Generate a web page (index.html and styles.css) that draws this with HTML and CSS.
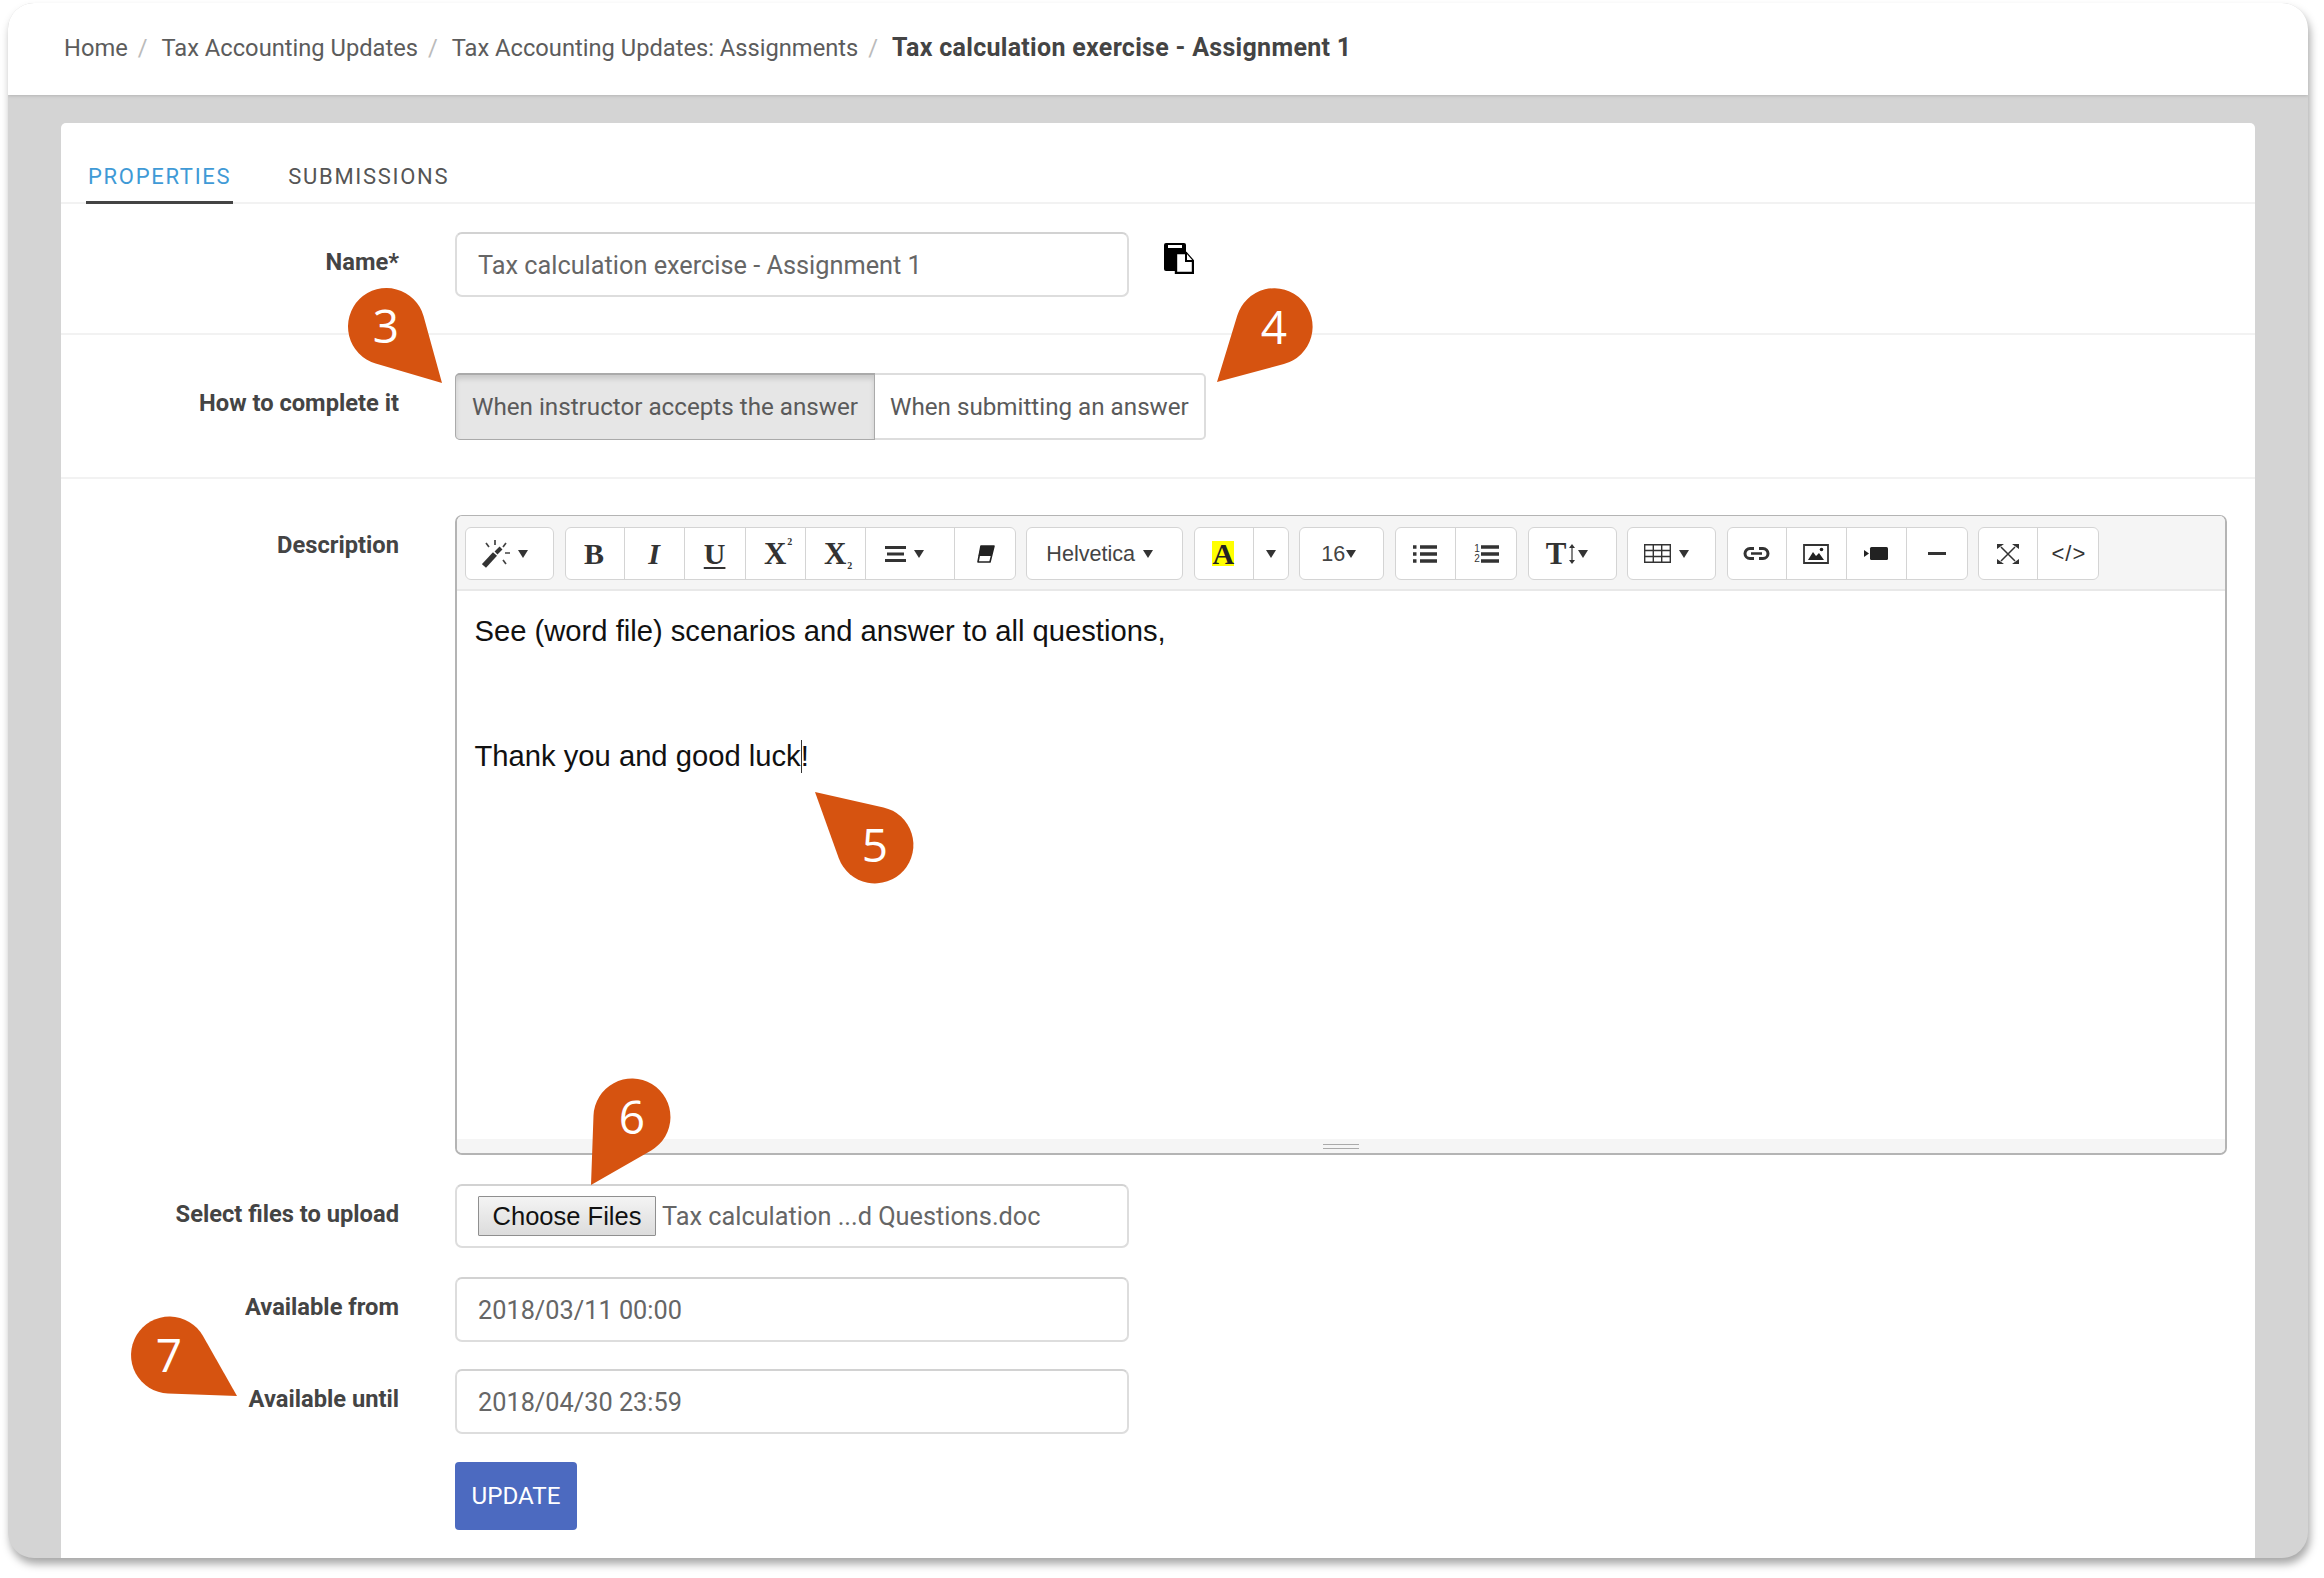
FILE: index.html
```html
<!DOCTYPE html>
<html lang="en">
<head>
<meta charset="utf-8">
<title>Tax calculation exercise - Assignment 1</title>
<link rel="stylesheet" href="styles.css">
</head>
<body>
<div class="frame">
  <nav class="crumbs">
    <a>Home</a><i>/</i><a>Tax Accounting Updates</a><i>/</i><a>Tax Accounting Updates: Assignments</a><i>/</i><b>Tax calculation exercise - Assignment 1</b>
  </nav>
  <main class="card">
    <div class="tabs">
      <span class="tab active">PROPERTIES</span>
      <span class="tab">SUBMISSIONS</span>
    </div>
    <section class="row row-name">
      <label class="lbl">Name*</label>
      <div class="ctl name-ctl">
        <div class="field">Tax calculation exercise - Assignment 1</div>
        <svg class="copy" viewBox="0 0 31 31" width="31" height="31"><path d="M1 2a2 2 0 0 1 2-2h18a2 2 0 0 1 2 2v26H3a2 2 0 0 1-2-2z" fill="#000"/><rect x="5" y="2" width="14" height="3" fill="#fff"/><path d="M13 10h10l7 8v12H13z" fill="#fff" stroke="#000" stroke-width="2.4"/><path d="M23 10v8h7" fill="#fff" stroke="#000" stroke-width="2"/></svg>
      </div>
    </section>
    <section class="row row-how">
      <label class="lbl">How to complete it</label>
      <div class="ctl">
        <div class="seg">
          <span class="seg-btn on">When instructor accepts the answer</span>
          <span class="seg-btn">When submitting an answer</span>
        </div>
      </div>
    </section>
    <section class="row row-rest">
      <label class="lbl">Description</label>
      <div class="ctl">
        <div class="editor">
          <div class="toolbar">
            <div class="grp"><span class="tb w89">
              <svg viewBox="0 0 28 28" width="28" height="28"><path d="M2 26 13 14" stroke="#333" stroke-width="5.500"/><path d="M14 13l5-5" stroke="#333" stroke-width="4"/><path d="M4 3l3 4M13 0v5M24 3l-3 4M23 13h5M21 20l3 4" stroke="#444" stroke-width="1.700" fill="none"/></svg><i class="caret"></i></span></div>
            <div class="grp">
              <span class="tb w60 ser">B</span>
              <span class="tb w60 ser it">I</span>
              <span class="tb w61 ser un">U</span>
              <span class="tb w60 ser sc">X<sup class="mini">2</sup></span>
              <span class="tb w60 ser sc">X<sub class="mini">2</sub></span>
              <span class="tb w89"><svg viewBox="0 0 21 16" width="21" height="16"><path d="M0 1.500h21M2 8h17M0 14.500h21" stroke="#333" stroke-width="3"/></svg><i class="caret"></i></span>
              <span class="tb w61"><svg viewBox="0 0 19 18" width="19" height="18"><path d="M5 1h13l-4 16H2z" fill="#fff" stroke="#222" stroke-width="1.600" stroke-linejoin="round"/><path d="M5 1h13l-2.400 10H2.600z" fill="#222"/></svg></span>
            </div>
            <div class="grp"><span class="tb w157 txt">Helvetica<i class="caret"></i></span></div>
            <div class="grp">
              <span class="tb w60"><span class="hl">A</span></span>
              <span class="tb w35"><i class="caret solo"></i></span>
            </div>
            <div class="grp"><span class="tb w85 txt tight">16<i class="caret"></i></span></div>
            <div class="grp">
              <span class="tb w61"><svg viewBox="0 0 24 18" width="24" height="18"><path d="M0 2h3.500M0 9h3.500M0 16h3.500" stroke="#333" stroke-width="3.400"/><path d="M7 2h17M7 9h17M7 16h17" stroke="#333" stroke-width="3.400"/></svg></span>
              <span class="tb w61 ol"><span class="ol-n">1<br>2</span><svg viewBox="0 0 18 18" width="18" height="18"><path d="M0 2h18M0 9h18M0 16h18" stroke="#333" stroke-width="3.400"/></svg></span>
            </div>
            <div class="grp"><span class="tb w89 tsize"><span class="bigt">T</span><svg viewBox="0 0 6 20" width="6" height="20"><path d="M3 2v16" stroke="#333" stroke-width="1.200"/><path d="M0 4l3-4 3 4zM0 16l3 4 3-4z" fill="#333"/></svg><i class="caret"></i></span></div>
            <div class="grp"><span class="tb w89"><svg viewBox="0 0 27 19" width="27" height="19"><path d="M.7.7h25.600v17.600H.7zM.7 6.500h25.600M.7 12.500h25.600M9.300.7v17.600M17.700.7v17.600" fill="none" stroke="#333" stroke-width="1.400"/></svg><i class="caret"></i></span></div>
            <div class="grp">
              <span class="tb w60"><svg viewBox="0 0 27 13" width="27" height="13"><path d="M11 1.500H7a5 5 0 0 0 0 10h4M16 1.500h4a5 5 0 0 1 0 10h-4" fill="none" stroke="#333" stroke-width="3"/><path d="M8 6.500h11" stroke="#333" stroke-width="2.400"/></svg></span>
              <span class="tb w60"><svg viewBox="0 0 26 20" width="26" height="20"><path d="M1 1h24v18H1z" fill="#fff" stroke="#333" stroke-width="1.800"/><path d="M5 16l5-8 3 4 3-3 5 7z" fill="#222"/><circle cx="18.500" cy="5.500" r="1.800" fill="#222"/></svg></span>
              <span class="tb w60"><svg viewBox="0 0 24 13" width="24" height="13"><rect x="6" y="0" width="18" height="13" rx="1.500" fill="#222"/><path d="M0 3l5 3.500L0 10z" fill="#222"/></svg></span>
              <span class="tb w61"><svg viewBox="0 0 18 3" width="18" height="3"><rect width="18" height="3" fill="#333"/></svg></span>
            </div>
            <div class="grp">
              <span class="tb w60"><svg viewBox="0 0 22 20" width="22" height="20"><path d="M4 3l14 14M18 3 4 17" stroke="#333" stroke-width="1.500"/><path d="M0 0h7L0 5zM22 0h-7l7 5zM0 20h7L0 15zM22 20h-7l7-5z" fill="#333"/></svg></span>
              <span class="tb w61 code">&lt;/&gt;</span>
            </div>
          </div>
          <div class="content">
            <p>See (word file) scenarios and answer to all questions,</p>
            <p><br></p>
            <p><br></p>
            <p>Thank you and good luck<span class="cursor"></span>!</p>
          </div>
          <div class="statusbar"><span class="grip"></span></div>
        </div>
      </div>
      <label class="lbl lbl-file">Select files to upload</label>
      <div class="ctl ctl-file">
        <div class="field filebox"><button class="choose" type="button">Choose Files</button><span class="fname">Tax calculation ...d Questions.doc</span></div>
      </div>
      <label class="lbl lbl-date">Available from</label>
      <div class="ctl ctl-date"><div class="field">2018/03/11 00:00</div></div>
      <label class="lbl lbl-date">Available until</label>
      <div class="ctl ctl-date"><div class="field">2018/04/30 23:59</div></div>
      <div class="ctl ctl-submit"><button class="update" type="button">UPDATE</button></div>
    </section>
  </main>
</div>
<svg class="callouts" viewBox="0 0 2324 1578" width="2324" height="1578">
  <g class="drop">
    <path d="M442 383 423.600 316.300A38.500 38.500 0 1 0 375.600 363.500Z"/>
    <path d="M1217 382 1237.200 315.800A38.500 38.500 0 1 1 1283.900 364Z"/>
    <path d="M815 792 883.500 807.400A38.500 38.500 0 1 1 838.700 858Z"/>
    <path d="M591 1185 593.500 1115.600A38.500 38.500 0 1 1 651.200 1150.400Z"/>
    <path d="M237 1396 203 1336A38.500 38.500 0 1 0 168 1393.500Z"/>
  </g>
  <g class="num">
    <text x="386" y="343">3</text>
    <text x="1274" y="344">4</text>
    <text x="875" y="862">5</text>
    <text x="632" y="1134">6</text>
    <text x="169" y="1372">7</text>
  </g>
</svg>
</body>
</html>
```
FILE: styles.css
```css
* { box-sizing: border-box; }
html, body { margin: 0; padding: 0; background: #fff; }
body {
  width: 2324px;
  height: 1578px;
  padding: 3px 16px 20px 8px;
  font-family: Roboto, "Liberation Sans", sans-serif;
  color: #555;
  overflow: hidden;
  position: relative;
}
.frame {
  height: 1555px;
  background: #d4d4d4;
  border-radius: 26px;
  box-shadow: 2px 6px 8px rgba(0, 0, 0, .35);
  overflow: hidden;
  display: flex;
  flex-direction: column;
}
.crumbs {
  height: 92px;
  flex: none;
  background: #fff;
  box-shadow: 0 1px 3px rgba(0, 0, 0, .15);
  padding: 27px 0 0 56px;
  font-size: 23.700px;
  line-height: 36px;
  color: #5c5c5c;
  display: flex;
  white-space: nowrap;
}
.crumbs i { font-style: normal; color: #bbb; margin: 0 14px 0 10px; }
.crumbs b { color: #444; font-weight: 700; font-size: 25px; letter-spacing: .3px; }
.card {
  flex: 1;
  margin: 28px 53px 0;
  background: #fff;
  border-radius: 5px 5px 0 0;
}
.tabs {
  height: 81px;
  border-bottom: 2px solid #f2f2f2;
  padding-left: 25px;
  display: flex;
  gap: 53px;
}
.tab {
  margin-top: 38px;
  height: 43px;
  padding: 0 2px;
  font-size: 22px;
  line-height: 32px;
  letter-spacing: 1.700px;
  color: #555;
}
.tab.active { color: #3f9ad6; border-bottom: 3px solid #444; }
.row {
  display: grid;
  grid-template-columns: 338px 674px;
  column-gap: 56px;
  border-bottom: 2px solid #f2f2f2;
}
.row-name { padding-top: 28px; height: 131px; }
.row-how { padding-top: 38px; height: 144px; }
.row-rest { padding-top: 36px; border-bottom: 0; grid-template-columns: 338px 1772px; }
.lbl {
  text-align: right;
  font-weight: 700;
  font-size: 23.700px;
  line-height: 36px;
  color: #444;
  padding-top: 12px;
}
.name-ctl { display: flex; align-items: flex-start; }
.field {
  height: 65px;
  width: 674px;
  flex: none;
  border: 2px solid #ddd;
  border-top-color: #d2d2d2;
  border-radius: 7px;
  padding: 0 21px;
  font-size: 25.300px;
  line-height: 63px;
  color: #666;
  background: #fff;
}
.copy { margin: 11px 0 0 34px; flex: none; }
.seg {
  display: inline-flex;
  height: 67px;
  border: 2px solid #ddd;
  border-radius: 5px;
  font-size: 24.200px;
  line-height: 64px;
  color: #5a5a5a;
}
.seg-btn { padding: 0 15px; white-space: nowrap; }
.seg-btn.on {
  background: #e6e6e6;
  box-shadow: inset 0 4px 5px rgba(0, 0, 0, .12);
  margin: -2px 0 -2px -2px;
  padding: 0 16px;
  border: 1px solid #aaa;
  border-top-width: 2px;
  border-radius: 5px 0 0 5px;
}
.editor {
  height: 640px;
  border: 2px solid #b4b4b4;
  border-top-width: 1px;
  border-radius: 7px;
  display: flex;
  flex-direction: column;
  overflow: hidden;
}
.toolbar {
  height: 75px;
  flex: none;
  background: #f5f5f5;
  border-bottom: 2px solid #e8e8e8;
  padding: 11px 0 0 8px;
  display: flex;
  gap: 10.600px;
}
.grp {
  height: 53px;
  display: flex;
  background: #fff;
  border: 1px solid #d4d4d4;
  border-radius: 6px;
}
.tb {
  height: 100%;
  display: flex;
  align-items: center;
  justify-content: center;
  gap: 8px;
  border-right: 1px solid #d4d4d4;
  color: #333;
}
.tb:first-child { margin-left: -1px; }
.tb:last-child { border-right: 0; margin-right: -1px; }
.w35 { width: 35px; }
.w60 { width: 60px; }
.w61 { width: 61px; }
.w85 { width: 85px; }
.w89 { width: 89px; }
.w157 { width: 157px; }
.ser { font-family: "Liberation Serif", serif; font-weight: 700; font-size: 30px; }
.it { font-style: italic; }
.un { text-decoration: underline; text-underline-offset: 3px; text-decoration-thickness: 2px; }
.sc { gap: 0; font-size: 31px; padding-left: 6px; }
.mini { font-size: 10px; line-height: 0; font-weight: 700; align-self: center; }
sup.mini { margin: -24px 0 0 1px; }
sub.mini { margin: 24px 0 0 1px; }
.txt { font-family: "Liberation Sans", sans-serif; font-size: 21.600px; color: #444; }
.caret {
  width: 0;
  height: 0;
  border-top: 8px solid #333;
  border-left: 5.500px solid transparent;
  border-right: 5.500px solid transparent;
  margin-right: 10px;
}
.caret.solo { margin-right: 0; }
.tight { gap: 1px; }
.tight .caret { margin-right: 6px; }
.tsize { gap: 3px; }
.hl {
  background: #ff0;
  width: 22px;
  height: 25px;
  text-align: center;
  font-family: "Liberation Serif", serif;
  font-weight: 700;
  font-size: 30px;
  line-height: 26px;
  color: #222;
}
.ol { gap: 1px; }
.ol-n { font-family: "Liberation Sans", sans-serif; font-size: 10px; line-height: 10px; }
.bigt { font-family: "Liberation Serif", serif; font-weight: 700; font-size: 31px; line-height: 32px; }
.code { font-family: "Liberation Sans", sans-serif; font-size: 22px; letter-spacing: 1px; }
.content {
  flex: 1;
  padding: 20px 0 0 17.500px;
  font-family: "Liberation Sans", sans-serif;
  font-size: 29.200px;
  line-height: 41.700px;
  color: #111;
}
.content p { margin: 0; }
.cursor {
  display: inline-block;
  width: 1.500px;
  height: 33px;
  margin-right: -1.500px;
  background: #333;
  vertical-align: -7px;
}
.statusbar {
  height: 14px;
  flex: none;
  background: #f5f5f5;
  display: flex;
  justify-content: center;
  padding-top: 5px;
}
.grip {
  width: 36px;
  height: 5px;
  border-top: 1px solid #aaa;
  border-bottom: 1px solid #aaa;
}
.ctl-file { margin-top: 29px; }
.lbl-file { margin-top: 29px; }
.filebox {
  height: 64px;
  padding: 0 0 0 21px;
  display: flex;
  align-items: center;
  gap: 6px;
  width: 674px;
}
.choose {
  width: 178px;
  height: 40px;
  padding: 0;
  border: 1px solid #8f8f8f;
  border-radius: 1px;
  background: linear-gradient(#f4f4f4, #dcdcdc);
  font-family: "Liberation Sans", sans-serif;
  font-size: 25.500px;
  color: #111;
}
.fname { font-size: 25.300px; color: #666; }
.ctl-date, .lbl-date { margin-top: 29px; }
.ctl-date + .lbl-date, .ctl-date + .lbl-date + .ctl-date { margin-top: 27px; }
.ctl-submit { grid-column: 2; margin-top: 28px; }
.update {
  width: 122px;
  height: 68px;
  border: 0;
  border-radius: 4px;
  background: #4c6ac0;
  color: #fff;
  font-family: Roboto, sans-serif;
  font-size: 24.200px;
  font-weight: 400;
  padding: 0;
}
.callouts { position: absolute; left: 0; top: 0; pointer-events: none; }
.drop { fill: #d65310; }
.num { fill: #fff; font-family: "Open Sans", sans-serif; font-weight: 400; font-size: 46px; text-anchor: middle; }
```
